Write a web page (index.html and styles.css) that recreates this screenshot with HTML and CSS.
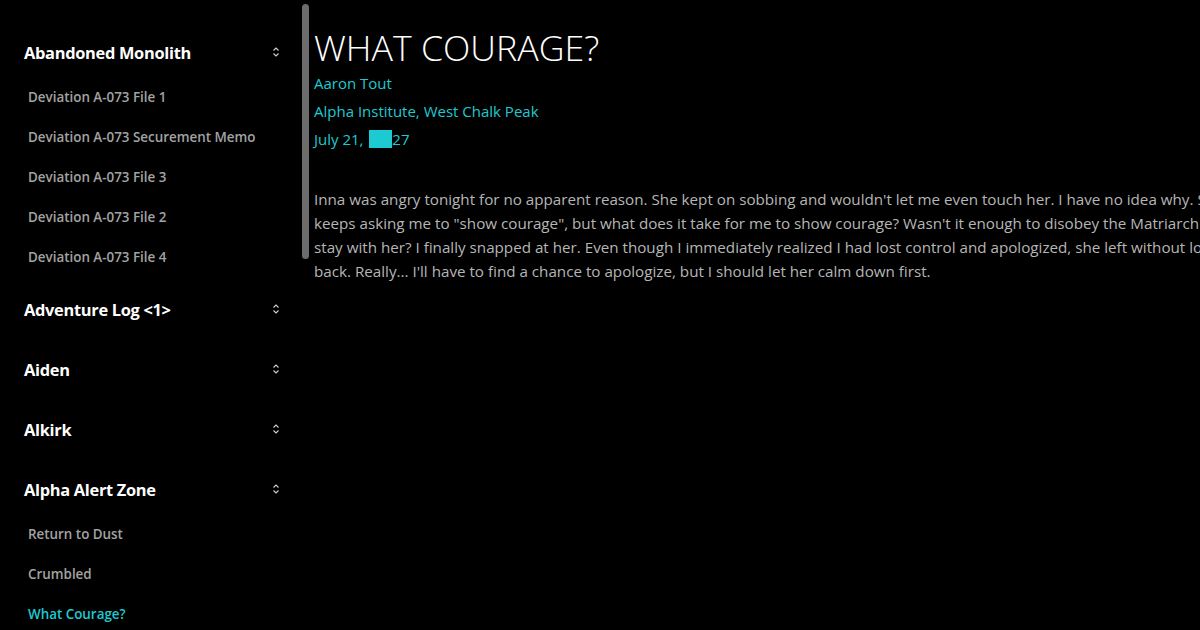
FILE: index.html
```html
<!DOCTYPE html>
<html lang="en">
<head>
<meta charset="utf-8">
<title>What Courage?</title>
<link rel="stylesheet" href="styles.css">
</head>
<body>
<div class="app">
  <nav class="sidebar">
    <div class="group open">
      <div class="group-head"><span>Abandoned Monolith</span><svg class="chev" viewBox="0 0 8 12" width="8" height="12"><path d="M1.5 4.5 L4 2 L6.5 4.5 M1.5 7.5 L4 10 L6.5 7.5"/></svg></div>
      <ul class="items">
        <li>Deviation A-073 File 1</li>
        <li>Deviation A-073 Securement Memo</li>
        <li>Deviation A-073 File 3</li>
        <li>Deviation A-073 File 2</li>
        <li>Deviation A-073 File 4</li>
      </ul>
    </div>
    <div class="group">
      <div class="group-head"><span>Adventure Log &lt;1&gt;</span><svg class="chev" viewBox="0 0 8 12" width="8" height="12"><path d="M1.5 4.5 L4 2 L6.5 4.5 M1.5 7.5 L4 10 L6.5 7.5"/></svg></div>
    </div>
    <div class="group">
      <div class="group-head"><span>Aiden</span><svg class="chev" viewBox="0 0 8 12" width="8" height="12"><path d="M1.5 4.5 L4 2 L6.5 4.5 M1.5 7.5 L4 10 L6.5 7.5"/></svg></div>
    </div>
    <div class="group">
      <div class="group-head"><span>Alkirk</span><svg class="chev" viewBox="0 0 8 12" width="8" height="12"><path d="M1.5 4.5 L4 2 L6.5 4.5 M1.5 7.5 L4 10 L6.5 7.5"/></svg></div>
    </div>
    <div class="group open">
      <div class="group-head"><span>Alpha Alert Zone</span><svg class="chev" viewBox="0 0 8 12" width="8" height="12"><path d="M1.5 4.5 L4 2 L6.5 4.5 M1.5 7.5 L4 10 L6.5 7.5"/></svg></div>
      <ul class="items">
        <li>Return to Dust</li>
        <li>Crumbled</li>
        <li class="active">What Courage?</li>
      </ul>
    </div>
  </nav>
  <div class="scroll-thumb"></div>
  <main class="content">
    <h1 class="title">WHAT COURAGE?</h1>
    <p class="meta">Aaron Tout</p>
    <p class="meta">Alpha Institute, West Chalk Peak</p>
    <p class="meta">July 21, <span class="redact">██</span>27</p>
    <p class="body-text">Inna was angry tonight for no apparent reason. She kept on sobbing and wouldn't let me even touch her. I have no idea why. She<br>keeps asking me to "show courage", but what does it take for me to show courage? Wasn't it enough to disobey the Matriarch to<br>stay with her? I finally snapped at her. Even though I immediately realized I had lost control and apologized, she left without looking<br>back. Really... I'll have to find a chance to apologize, but I should let her calm down first.</p>
  </main>
</div>
</body>
</html>
```
FILE: styles.css
```css
html, body {
  margin: 0;
  padding: 0;
  background: #000;
  height: 100%;
  overflow: hidden;
}
body {
  font-family: "Open Sans", "Noto Sans", "Liberation Sans", sans-serif;
  color: #fff;
}
.app {
  display: flex;
  position: relative;
  height: 630px;
  overflow: hidden;
}
.sidebar {
  flex: 0 0 300px;
  box-sizing: border-box;
  padding: 33px 20px 0 24px;
}
.group {
  margin-bottom: 20px;
}
.group.open {
  margin-bottom: 13px;
}
.group-head {
  display: flex;
  align-items: center;
  justify-content: space-between;
  box-sizing: border-box;
  height: 40px;
  padding-bottom: 2px;
  font-size: 16.4px;
  font-weight: 700;
  letter-spacing: -0.3px;
  color: #fff;
}
.chev {
  width: 8px;
  height: 12px;
}
.chev path {
  fill: none;
  stroke: #d0d0d0;
  stroke-width: 1.1;
}
.items {
  list-style: none;
  margin: 4px 0 0;
  padding: 0 0 0 4px;
}
.items li {
  height: 40px;
  line-height: 40px;
  font-size: 13.4px;
  font-weight: 600;
  color: #a3a3a3;
  white-space: nowrap;
}
.items li.active {
  color: #1fc9d1;
}
.scroll-thumb {
  position: absolute;
  left: 302px;
  top: 4px;
  width: 7px;
  height: 255px;
  border-radius: 4px;
  background: #6c6c6c;
}
.content {
  flex: 1 1 auto;
  padding: 26px 0 0 14px;
  min-width: 0;
}
.title {
  margin: 0;
  font-size: 35.7px;
  line-height: 43px;
  font-weight: 300;
  color: #fff;
  white-space: nowrap;
}
.meta {
  margin: 0;
  font-size: 15px;
  line-height: 28px;
  color: #1fc9d1;
  white-space: nowrap;
}
.redact {
  display: inline-block;
  width: 23px;
  height: 18px;
  margin-left: 2px;
  vertical-align: -3px;
  overflow: hidden;
  background: #1ccbd2;
  color: #1ccbd2;
  line-height: 18px;
  font-size: 12px;
}
.body-text {
  margin: 34px 0 0;
  font-size: 15.2px;
  line-height: 24px;
  color: #b6b6b6;
  white-space: nowrap;
}
```
